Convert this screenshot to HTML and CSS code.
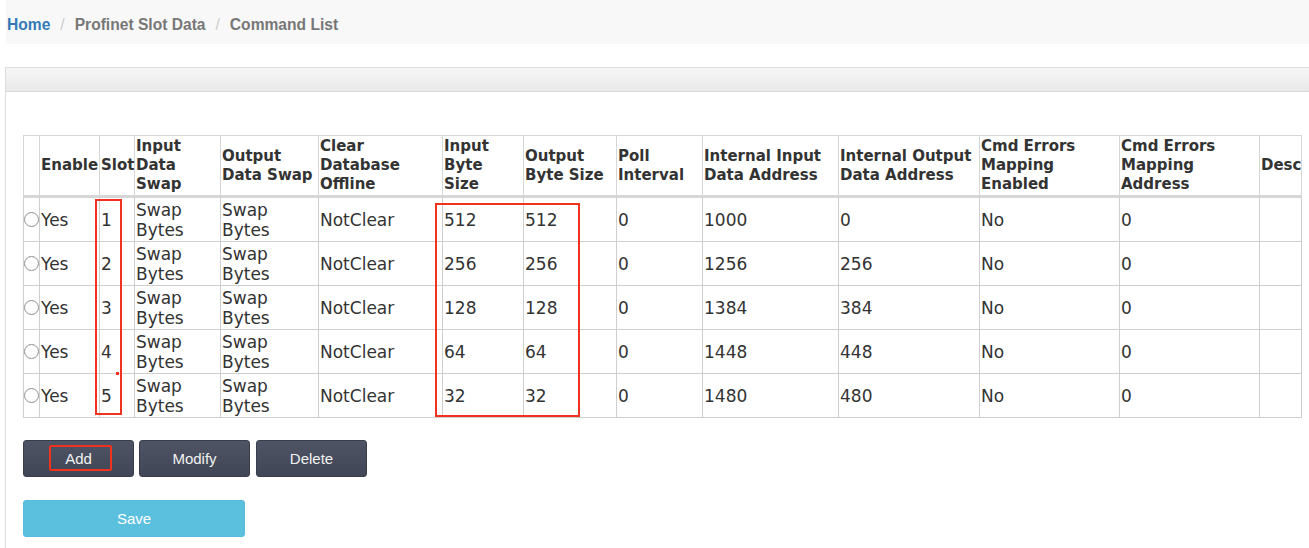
FILE: index.html
```html
<!DOCTYPE html>
<html>
<head>
<meta charset="utf-8">
<link rel="stylesheet" href="styles.css">
</head>
<body>
<div class="page">
  <ol class="breadcrumb">
    <li class="crumb home">Home</li>
    <li class="sep">/</li>
    <li class="crumb">Profinet Slot Data</li>
    <li class="sep">/</li>
    <li class="crumb">Command List</li>
  </ol>

  <div class="panel">
    <div class="panel-heading"></div>
    <div class="panel-body">
      <table class="grid">
        <colgroup>
          <col class="c-radio"><col class="c-enable"><col class="c-slot"><col class="c-ids"><col class="c-ods">
          <col class="c-clear"><col class="c-ibs"><col class="c-obs"><col class="c-poll"><col class="c-iia">
          <col class="c-ioa"><col class="c-cee"><col class="c-cea"><col class="c-desc">
        </colgroup>
        <thead>
          <tr>
            <th></th>
            <th>Enable</th>
            <th>Slot</th>
            <th>Input<br>Data<br>Swap</th>
            <th>Output<br>Data Swap</th>
            <th>Clear<br>Database<br>Offline</th>
            <th>Input<br>Byte<br>Size</th>
            <th>Output<br>Byte Size</th>
            <th>Poll<br>Interval</th>
            <th>Internal Input<br>Data Address</th>
            <th>Internal Output<br>Data Address</th>
            <th>Cmd Errors<br>Mapping<br>Enabled</th>
            <th>Cmd Errors<br>Mapping<br>Address</th>
            <th>Desc</th>
          </tr>
        </thead>
        <tbody>
          <tr>
            <td class="rc"><span class="radio"></span></td>
            <td>Yes</td><td>1</td><td>Swap<br>Bytes</td><td>Swap<br>Bytes</td><td>NotClear</td>
            <td>512</td><td>512</td><td>0</td><td>1000</td><td>0</td><td>No</td><td>0</td><td></td>
          </tr>
          <tr>
            <td class="rc"><span class="radio"></span></td>
            <td>Yes</td><td>2</td><td>Swap<br>Bytes</td><td>Swap<br>Bytes</td><td>NotClear</td>
            <td>256</td><td>256</td><td>0</td><td>1256</td><td>256</td><td>No</td><td>0</td><td></td>
          </tr>
          <tr>
            <td class="rc"><span class="radio"></span></td>
            <td>Yes</td><td>3</td><td>Swap<br>Bytes</td><td>Swap<br>Bytes</td><td>NotClear</td>
            <td>128</td><td>128</td><td>0</td><td>1384</td><td>384</td><td>No</td><td>0</td><td></td>
          </tr>
          <tr>
            <td class="rc"><span class="radio"></span></td>
            <td>Yes</td><td>4</td><td>Swap<br>Bytes</td><td>Swap<br>Bytes</td><td>NotClear</td>
            <td>64</td><td>64</td><td>0</td><td>1448</td><td>448</td><td>No</td><td>0</td><td></td>
          </tr>
          <tr>
            <td class="rc"><span class="radio"></span></td>
            <td>Yes</td><td>5</td><td>Swap<br>Bytes</td><td>Swap<br>Bytes</td><td>NotClear</td>
            <td>32</td><td>32</td><td>0</td><td>1480</td><td>480</td><td>No</td><td>0</td><td></td>
          </tr>
        </tbody>
      </table>

      <div class="actions">
        <button class="btn btn-dark">Add</button>
        <button class="btn btn-dark">Modify</button>
        <button class="btn btn-dark">Delete</button>
      </div>
      <div class="save-row">
        <button class="btn btn-save">Save</button>
      </div>
    </div>
  </div>

  <div class="mark mark-slot"></div>
  <div class="mark-dot"></div>
  <div class="mark mark-bytes"></div>
  <div class="mark mark-add"></div>
</div>
</body>
</html>
```

FILE: styles.css
```css
html, body {
  margin: 0;
  padding: 0;
  background: #ffffff;
  overflow: hidden;
}

.page {
  position: relative;
  width: 1309px;
  height: 548px;
  overflow: hidden;
  font-family: "Liberation Sans", Arial, sans-serif;
}

/* breadcrumb */
.breadcrumb {
  list-style: none;
  margin: 0 0 0 6px;
  padding: 5px 0 0 1px;
  height: 39px;
  display: flex;
  align-items: center;
  background: #f8f8f8;
  font-size: 15.6px;
  font-weight: bold;
}
.crumb { color: #777777; }
.crumb.home { color: #337ab7; }
.sep {
  color: #cccccc;
  font-weight: normal;
  margin: 0 10px 0 10px;
}

/* panel */
.panel {
  margin: 23px -20px 0 5px;
  border: 1px solid #dddddd;
  border-bottom: none;
  height: 500px;
  background: #ffffff;
}
.panel-heading {
  height: 23px;
  background: linear-gradient(#f6f6f6, #e9e9e9);
  border-bottom: 1px solid #d8d8d8;
}
.panel-body {
  padding: 43px 0 0 17px;
}

/* table */
.grid {
  border-collapse: collapse;
  table-layout: fixed;
  width: 1278px;
  font-family: "DejaVu Sans", Verdana, sans-serif;
  color: #333333;
  border: 1px solid #e3e3e3;
}
.c-radio { width: 16px; }
.c-enable { width: 60px; }
.c-slot { width: 35px; }
.c-ids { width: 86px; }
.c-ods { width: 98px; }
.c-clear { width: 124px; }
.c-ibs { width: 81px; }
.c-obs { width: 93px; }
.c-poll { width: 86px; }
.c-iia { width: 136px; }
.c-ioa { width: 141px; }
.c-cee { width: 140px; }
.c-cea { width: 140px; }
.c-desc { width: 42px; }

.grid th {
  font-size: 15px;
  font-weight: bold;
  line-height: 19px;
  text-align: left;
  vertical-align: middle;
  white-space: nowrap;
  padding: 1px 0 1px 1px;
  height: 55px;
  border: 1px solid #d6d6d6;
  border-bottom: 3px solid #d6d6d6;
}
.grid td {
  font-size: 17px;
  line-height: 20px;
  vertical-align: middle;
  white-space: nowrap;
  padding: 1px 0 1px 1px;
  height: 41px;
  border: 1px solid #cfcfcf;
}
.grid td.rc { padding: 0; }

.radio {
  display: block;
  width: 15px;
  height: 15px;
  margin-left: 0;
  border: 1.5px solid #8f8f8f;
  border-radius: 50%;
  box-sizing: border-box;
  background: #ffffff;
}

/* buttons */
.actions {
  display: flex;
  gap: 5px;
  margin-top: 22px;
}
.btn {
  font-family: "Liberation Sans", Arial, sans-serif;
  font-size: 15px;
  height: 37px;
  border-radius: 3px;
  cursor: pointer;
  padding: 0;
}
.btn-dark {
  width: 111px;
  color: #f2f2f2;
  background: linear-gradient(#4e5465, #414656);
  border: 1px solid #3a3e4b;
}
.actions .btn-dark:last-child { margin-left: 1px; }
.save-row {
  margin-top: 23px;
}
.btn-save {
  width: 222px;
  color: #ffffff;
  background: #5bc0de;
  border: 1px solid #55bcd9;
}

/* red annotation marks */
.mark {
  position: absolute;
  border: 2px solid #f0321e;
  box-sizing: border-box;
}
.mark-slot { left: 95px; top: 199px; width: 27px; height: 216px; }
.mark-bytes { left: 435px; top: 203px; width: 145px; height: 214px; }
.mark-add { left: 49px; top: 445px; width: 63px; height: 26px; border-radius: 2px; }
.mark-dot {
  position: absolute;
  left: 116px;
  top: 372px;
  width: 3px;
  height: 3px;
  background: #f0321e;
}
```
